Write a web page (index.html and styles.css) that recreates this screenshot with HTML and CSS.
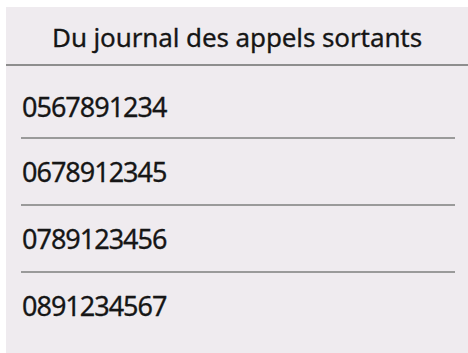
FILE: index.html
```html
<!DOCTYPE html>
<html lang="fr">
<head>
<meta charset="utf-8">
<link rel="stylesheet" href="styles.css">
</head>
<body>
<div class="panel">
  <div class="header">Du journal des appels sortants</div>
  <ul class="list">
    <li class="row first">0567891234</li>
    <li class="row">0678912345</li>
    <li class="row">0789123456</li>
    <li class="row last">0891234567</li>
  </ul>
</div>
</body>
</html>
```
FILE: styles.css
```css
html, body {
  margin: 0;
  padding: 0;
  background: #ffffff;
}
body {
  padding: 7px 0 0 6px;
  height: 353px;
  box-sizing: border-box;
  overflow: hidden;
}
.panel {
  background: #efebef;
  height: 346px;
  font-family: "Noto Sans", "DejaVu Sans", sans-serif;
  color: #161616;
  overflow: hidden;
  -webkit-text-stroke: 0.3px #161616;
}
.header {
  height: 59px;
  box-sizing: border-box;
  padding-top: 10px;
  line-height: 40px;
  font-size: 26px;
  text-align: center;
  letter-spacing: -0.1px;
  border-bottom: 2px solid #8e8e8e;
}
.list {
  list-style: none;
  margin: 0;
  padding: 0 13px 0 15px;
}
.row {
  height: 67px;
  box-sizing: border-box;
  border-bottom: 2px solid #9a9a9a;
  font-size: 27px;
  letter-spacing: -1px;
  line-height: 65px;
  padding-left: 1px;
}
.row.first {
  height: 73px;
  padding-top: 8px;
}
.row.last {
  border-bottom: none;
}
```
